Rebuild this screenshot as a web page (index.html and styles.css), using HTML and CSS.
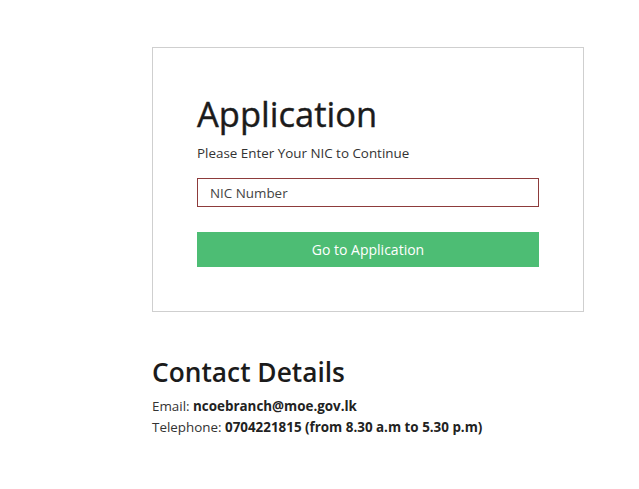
FILE: index.html
```html
<!DOCTYPE html>
<html>
<head>
<meta charset="utf-8">
<link rel="stylesheet" href="styles.css">
</head>
<body>
<div class="page">
  <div class="card">
    <h1 class="title">Application</h1>
    <p class="subtitle">Please Enter Your NIC to Continue</p>
    <input class="nic" type="text" placeholder="NIC Number">
    <button class="go">Go to Application</button>
  </div>
  <div class="contact">
    <h2 class="contact-title">Contact Details</h2>
    <p class="line">Email: <b>ncoebranch@moe.gov.lk</b></p>
    <p class="line">Telephone: <b>0704221815 (from 8.30 a.m to 5.30 p.m)</b></p>
  </div>
</div>
</body>
</html>
```
FILE: styles.css
```css
html, body { margin: 0; padding: 0; background: #fff; }
body { font-family: "Open Sans", "Noto Sans", sans-serif; color: #212529; }
.page { padding: 47px 0 0 152px; width: 432px; }
.card {
  border: 1px solid #cfcfcf;
  padding: 46px 44px 44px 44px;
  display: flex;
  flex-direction: column;
}
.title { margin: 0; font-size: 34.5px; font-weight: 500; line-height: 40px; color: #1b1b1b; -webkit-text-stroke: 0.4px #1b1b1b; }
.subtitle { margin: 10px 0 0; font-size: 13.4px; line-height: 18px; color: #333; }
.nic {
  margin-top: 16px;
  height: 29px;
  box-sizing: border-box;
  border: 1px solid #8d3b3b;
  padding: 0 12px;
  font-family: inherit;
  font-size: 13.4px;
  outline: none;
}
.nic::placeholder { color: #444; }
.go {
  margin-top: 25px;
  height: 35px;
  border: 0;
  background: #4dbd74;
  color: #fff;
  font-family: inherit;
  font-size: 14px;
}
.contact { margin-top: 43px; }
.contact-title { margin: 0 0 7px; font-size: 26.3px; font-weight: 600; line-height: 34px; color: #1b1b1b; }
.line { margin: 0; font-size: 13.4px; line-height: 21px; color: #333; }
.line b { font-weight: 700; color: #222; }
```
